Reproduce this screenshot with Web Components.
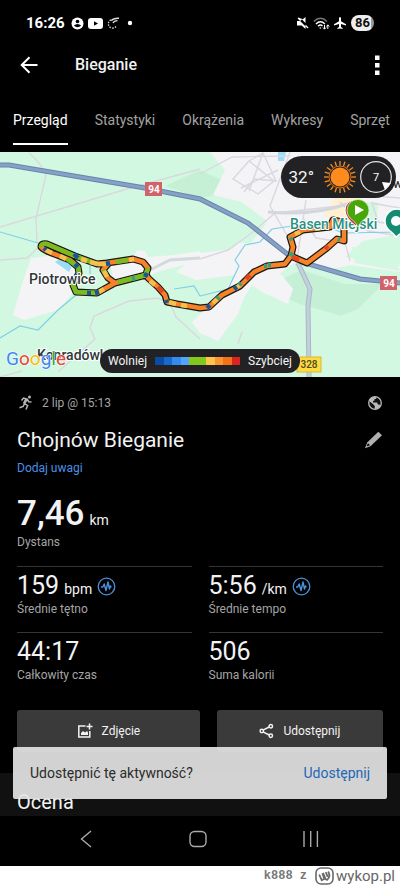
<!DOCTYPE html>
<html lang="pl">
<head>
<meta charset="utf-8">
<meta name="viewport" content="width=device-width, initial-scale=1">
<title>Bieganie</title>
<style>
  body { margin: 0; background: #fff; color: #f2f2f2; font-family: Roboto, "Liberation Sans", sans-serif; }
</style>
</head>
<body>
<activity-screen></activity-screen>

<script>
const define = (name, markup) => customElements.define(name, class extends HTMLElement {
  constructor() {
    super();
    const t = document.createElement('template');
    t.innerHTML = typeof markup === 'function' ? markup(this) : markup;
    this.attachShadow({ mode: 'open' }).append(t.content.cloneNode(true));
  }
});

define('status-bar', `
<style>
  :host { display: flex; align-items: center; height: 46px; padding: 0 26px; gap: 4px; color: #fff; }
  time { font: 700 15px/20px Roboto, sans-serif; margin-right: 2px; }
  .space { flex: 1; }
  .battery { font: 700 13px/16px Roboto, sans-serif; color: #111; background: linear-gradient(90deg, #eee 86%, #999 86%); border-radius: 8px; padding: 0 4px; margin-left: 1px; }
  svg { display: block; }
</style>
<time>16:26</time>
<svg width="13" height="13" viewBox="0 0 13 13" aria-hidden="true"><circle cx="6.500" cy="6.500" r="6" fill="#fff"/><circle cx="6.500" cy="4.500" r="1.800"/><path d="M2.800 8.600Q6.500 5.500 10.200 8.600Q6.500 12 2.800 8.600Z"/></svg>
<svg width="15" height="11" viewBox="0 0 15 11" aria-hidden="true"><rect width="15" height="11" rx="3" fill="#fff"/><path d="M6 3.200v4.600l4-2.300z"/></svg>
<svg width="14" height="12" viewBox="0 0 14 12" aria-hidden="true" fill="none" stroke="#ddd"><path d="M9 9.500A4.300 4.300 0 1 1 6 2.500" stroke-width="1.300" stroke-dasharray="1.500 1.200"/><path d="M4 3.500Q8 .8 12 1.300M6 6Q7 3.800 10.500 3.600" stroke-width="1.400"/></svg>
<svg width="10" height="6" viewBox="0 0 10 6" aria-hidden="true"><circle cx="5" cy="3" r="2.200" fill="#fff"/></svg>
<span class="space"></span>
<svg width="12" height="12" viewBox="0 0 12 12" aria-hidden="true"><path fill="#fff" d="M0 4h3l2-1.600L8.500 6V0L5.800 2.200 1.400.5.600 1.400l10 10 .9-.9-3-3V12L4.700 8.500H0z"/></svg>
<svg width="17" height="13" viewBox="0 0 17 13" aria-hidden="true" fill="none" stroke="#fff"><path d="M.8 4.500Q7.500-1.800 14 4.500" stroke="#777" stroke-width="1.400"/><path d="M3 7Q7.500 2.600 11.800 7M5 9.200Q7.500 7 9.500 9" stroke-width="1.400"/><circle cx="7.300" cy="11" r=".8" fill="#fff" stroke="none"/><path d="M11.500 8v4M10 10.500l1.500 1.700 1.500-1.700M14.800 12V8M13.400 9.500l1.400-1.700 1.400 1.700"/></svg>
<svg width="12" height="12" viewBox="0 0 12 12" aria-hidden="true"><path fill="#fff" d="M5 1Q6-1 7 1v3.200l5 3V8.500L7 7v3l1.600 1v1L6 11.400 3.400 12v-1L5 10V7L0 8.500V7.200l5-3z"/></svg>
<span class="battery">86</span>`);

define('app-bar', `
<style>
  :host { display: flex; align-items: center; height: 38px; padding: 0 16px; }
  button { border: 0; background: none; padding: 0; width: 26px; height: 26px; display: grid; place-items: center; }
  h1 { flex: 1; margin: 0 0 0 33px; font: 500 16px/22px Roboto, sans-serif; }
  button:last-child { width: 14px; }
</style>
<button aria-label="Wstecz"><svg width="18" height="18" viewBox="0 0 18 18" fill="none" stroke="#fff" stroke-width="2"><path d="M17.500 9H2M9.500 1.200L1.700 9l7.800 7.800"/></svg></button>
<h1><slot></slot></h1>
<button aria-label="Więcej"><svg width="5" height="20" viewBox="0 0 5 20" fill="#fff"><path d="M0 .5h4.500V5H0zM0 8h4.500v4.500H0zM0 15.500h4.500V20H0z"/></svg></button>`);

define('tab-strip', `
<style>
  :host { display: block; height: 68px; overflow: hidden; }
  nav { display: flex; gap: 27px; padding: 14px 0 0 13px; }
</style>
<nav><slot></slot></nav>`);

define('tab-link', `
<style>
  :host { display: block; flex: none; text-align: center; }
  a { display: block; font: 400 14px/20px Roboto, sans-serif; color: #a2a2a2; text-decoration: none; padding: 12px 0 13px; border-bottom: 2px solid transparent; }
  :host([selected]) a { color: #fff; border-color: #fff; }
</style>
<a href="#"><slot></slot></a>`);

const sunRays = Array.from({ length: 20 }, (_, i) => `<path d="M17 1v4.500" transform="rotate(${i * 18} 17 17)"/>`).join('');
const outline = 'M291 104L285 112L267 114L254 120L240 134L222 143L209 155L200 156L177 152L167 150L165 143L158 135L148 126L146 122L148 116L143 110L133 107L107 111L97 112L75 104L47 92Q41 91 41 95Q45 99 57 103L70 108L78 115L79 121L73 133L76 140L97 141L115 131L146 123M98 112L108 112L103 118L108 126L115 131M291 104L293 95L290 85L303 78L330 75L333 68L342 70L344 76L344 89L337 87L327 96L307 111L291 104';

define('route-map', `
<style>
  :host { display: block; position: relative; }
  .map { display: block; width: 100%; height: auto; }
  .weather { position: absolute; top: 4px; right: 4px; height: 42px; display: flex; align-items: center; gap: 9px; padding: 0 4px 0 8px; border-radius: 21px; background: #222224; font-size: 17px; color: #f4f4f4; }
  .weather svg { display: block; }
  .compass { margin-left: -6px; }
  .legend { position: absolute; bottom: 4px; left: 50%; transform: translateX(-50%); display: flex; align-items: center; gap: 8px; padding: 0 8px; border-radius: 12px; background: #222224; font-size: 12px; line-height: 24px; color: #f4f4f4; }
  .scale { width: 85px; height: 8px; background: linear-gradient(90deg, #0c4ba4 0 10%, #1769cb 10% 20%, #338aef 20% 30%, #54a4ff 30% 40%, #82c91e 40% 60%, #ffc64c 60% 70%, #ff952e 70% 80%, #f47115 80% 90%, #da2420 90%); }
</style>
<svg class="map" viewBox="0 0 400 225" role="img" aria-label="Mapa trasy">
  <rect width="400" height="225" fill="#d3f8e2"/>
  <g fill="#c5f0d6">
    <path d="M165 34L200 18 222 28 222 42 200 46z"/><path d="M284 126L302 118 345 132 383 132 358 157 341 164 300 152 278 143z"/>
  </g>
  <g fill="#f4f3f5">
    <path d="M210 0H400V82L363 89 345 105 400 114V120L350 113 328 118 310 111 296 110 280 121 293 137 288 152 262 140 252 133 244 146 238 162 218 189 200 181 192 170 222 141 236 123 196 128 176 120 200 101 232 97 254 75 268 70 242 50 213 43 225 18z"/>
    <path d="M31 106L57 103 78 115 74 140 58 158 24 168 13 163 22 132z"/>
    <path d="M110 109L135 103 137 98 145 99 148 105 174 103 200 99V109L160 119 140 127 113 128z"/>
  </g>
  <path fill="#d3f8e2" d="M336 52l42-2-1 18-20 8-20-14zM352 95l38 2 10 22-45-8zM228 58l38 14-16 20-30-4z"/>
  <path fill="#fff0d2" d="M337 42l25 4 8 20-28 3-18-5z"/>
  <path fill="#9bdcf4" d="M278 0h8l-2 9h-6zM55 110l6-4 12 6-4 8z"/>
  <g fill="none" stroke="#dad7e0" stroke-width="1.400">
    <path d="M29 1Q42 12 46 23L36 66 37 91M0 75L127 37 200 17M0 108L27 106 40 94M90 176L94 164 129 149 158 146 170 151 176 165 200 187M90 176L95 187 58 220M242 180l-4 12M0 225L22 219"/>
    <path d="M200 22L232 5 290 4M200 107L228 98 253 80 275 61 340 54M233 27l16-18 25 20-16 13zM249 9l14-8 13 28-22-2-10 13M263 1l-14 38M241 36l37-18M290 0l-20 54 18 31M306 48l-10 66M340 50l28 29 32 5M371 51l29 5M372 50l6 20 22 3M374 10v34l26 2M344 87l6 22M303 66l13 20 20 3"/>
    <path d="M200 106L170 108 150 118" stroke="#d2dadb" stroke-width="3"/>
    <path d="M268 60Q315 64 350 51" stroke="#d2d6dd" stroke-width="3"/>
  </g>
  <path fill="none" stroke="#7ed0e6" stroke-width="1.200" d="M0 80L38 91M0 186L20 174 38 178 58 158 76 143M200 144L228 137 239 114 235 108 245 93 260 90 272 77 292 74M90 113v9M174 137l20-3 6 10M308 80l25-3 10 4 57-1"/>
  <g fill="none"><path d="M298 111L310 137 308 154 309 225" stroke="#a7b8c8" stroke-width="5"/><path d="M298 111L310 137 308 154 309 225" stroke="#c3d0dc" stroke-width="3"/>
    <path d="M0 13H9L145 36 200 47 248 71 291 105 308 112 360 127 400 131" stroke="#6784ae" stroke-width="5"/>
    <path d="M0 13H9L145 36 200 47 248 71 291 105 308 112 360 127 400 131" stroke="#87a1c4" stroke-width="3"/></g>
  <g fill="none" stroke-linejoin="round" stroke-linecap="round">
    <path d="${outline}" stroke="#151a12" stroke-width="7"/>
    <path d="${outline}" stroke="#f8822a" stroke-width="4.500"/>
    <g stroke-linecap="butt" stroke-width="4.500">
      <path stroke="#77bd22" d="M97 112L75 104L47 92Q41 91 41 95M67 107L78 115L79 121L73 133L76 140L97 141M118 130L146 123M146 122L148 116M116 110L128 108M103 118L106 122"/>
      <path stroke="#f7bf4c" d="M46 98L52 101M60 104L66 107M81 107L87 109M90 110L98 112M129 108L134 107M98 112L106 112M104 119L107 125M169 150L176 152M181 153L187 154M213 151L217 147M236 136L240 133M99 140L104 137M150 129L155 133M295 82L300 80M315 77L320 76"/>
      <path stroke="#17569b" d="M74 102L78 106M44 96L46 98M106 112L110 111M95 141L99 140M145 125L147 121M166 148L167 151M207 156L210 153M75 112L78 115M77 122L75 127M87 141L91 141M234 137L237 135"/>
      <path stroke="#34a080" d="M264 114L267 114M290 86L292 88M290 104L293 101M338 87L340 88M217 147L219 145M239 133L241 131M132 127L135 126M268 113L271 113"/>
      <path stroke="#e6441d" d="M158 135L163 140M292 105L299 108M246 127L250 123M325 97L328 94"/>
    </g>
  </g>
  <g font-family="Roboto, sans-serif" font-weight="500" fill="#30383a" stroke="#fff" stroke-width="2" stroke-linejoin="round" paint-order="stroke">
    <text x="29" y="132" font-size="14">Piotrowice</text>
    <text x="37" y="208" font-size="14">Konradówka</text>
    <text x="393" y="36" font-size="13">w</text>
    <text x="290" y="77" font-size="14" fill="#28917f">Basen Miejski</text>
  </g>
  <g font-family="Roboto, sans-serif" font-weight="700" font-size="10" text-anchor="middle" fill="#fff">
    <rect x="145" y="30" width="17" height="14" fill="#d2626a"/><text x="154" y="41">94</text>
    <rect x="380" y="124" width="17" height="14" fill="#d2626a"/><text x="389" y="135">94</text>
    <rect x="297" y="205" width="24" height="15" fill="#fddb42" stroke="#d8b934"/><text x="309" y="216" font-weight="500" fill="#514820">328</text>
  </g>
  <path fill="#d82942" stroke="#fff" d="M356 74Q345 66 345 58A10 10 0 0 1 365 58z"/>
  <path fill="#48a708" stroke="#e5f5d8" stroke-width=".7" d="M358 75Q356 70 350 66A11 11 0 1 1 366 66Q360 70 358 75z"/>
  <path fill="#fff" d="M355 53v10l9-5z"/>
  <path fill="#138d72" stroke="#fff" stroke-width="1.500" d="M396 85Q394 82 389 78A12 12 0 1 1 405 78z"/><circle cx="396" cy="69" r="5" fill="#fff"/>
  <text x="6" y="213" font-family="Roboto, sans-serif" font-size="19" font-weight="400" stroke="#fff" stroke-width="1" paint-order="stroke"><tspan fill="#4285f4">G</tspan><tspan fill="#ea4335">o</tspan><tspan fill="#fbbc05">o</tspan><tspan fill="#4285f4">g</tspan><tspan fill="#34a853">l</tspan><tspan fill="#ea4335">e</tspan></text>
</svg>
<div class="weather"><span>32°</span>
  <svg width="34" height="34" viewBox="0 0 34 34" aria-hidden="true"><circle cx="17" cy="17" r="9.500" fill="#ff8a1d"/><circle cx="17" cy="17" r="11" fill="none" stroke="#ff8a1d" stroke-width=".8"/><g stroke="#ff8a1d" stroke-width="1.300">${sunRays}</g></svg>
  <svg class="compass" width="32" height="34" viewBox="0 0 32 34"><circle cx="16" cy="17" r="15.300" fill="none" stroke="#e4e4e4" stroke-width="1.200"/><path d="M22 22l9 1-6 7z" fill="#fff"/><text x="16" y="21" font-family="Roboto, sans-serif" font-size="11" text-anchor="middle" fill="#fff">7</text></svg>
</div>
<div class="legend"><span>Wolniej</span><span class="scale"></span><span>Szybciej</span></div>`);

define('activity-header', `
<style>
  :host { display: block; padding: 16px 17px 0; }
  .meta, .name { display: flex; align-items: center; }
  .meta { font-size: 12px; line-height: 20px; color: #a5a5a5; gap: 8px; }
  .meta span { flex: 1; }
  .name { margin-top: 12px; }
  h2 { flex: 1; margin: 0; font: 400 21px/30px Roboto, sans-serif; }
  button { border: 0; background: none; padding: 0; height: 20px; }
  a { display: block; margin-top: 4px; font-size: 12px; line-height: 18px; color: #4a91e6; text-decoration: none; }
  svg { display: block; }
</style>
<div class="meta">
  <svg width="17" height="16" viewBox="0 0 17 16" aria-hidden="true" fill="none" stroke="#b5b5b5" stroke-width="1.500"><circle cx="12.500" cy="2" r="1.500" fill="#b5b5b5" stroke="none"/><path d="M4.500 5.500L6.500 3l3.800 1.200L7.600 8.500l3 2L9 14.500M10.300 4.500l1.400 2.200 2.800.2M7.500 8.500L6.200 11.500 2.500 12.800M8.800 4.200L6.500 8.700"/></svg>
  <span><slot name="when"></slot></span>
  <svg width="16" height="16" viewBox="0 0 16 16" aria-label="Publiczne"><circle cx="8" cy="8" r="6.300" fill="#111" stroke="#b9b9b9" stroke-width="1.300"/><path fill="#b9b9b9" d="M2 5Q4 1.500 9.500 2.200L9 4H7.500V5.500L6 6V7.500h4l1 2h1.500l.8 2Q11.500 14 8 14.300L7.500 13 8 11.500 6.500 9.500 2 6z"/></svg>
</div>
<div class="name"><h2><slot name="title"></slot></h2>
  <button aria-label="Edytuj nazwę"><svg width="19" height="18" viewBox="0 0 19 18"><path fill="#b0b0b0" d="M14.300.7l3.700 3.600L6.500 15.300 1 17.200 3.200 11.500z"/><path d="M4 12.200L6 14.300 3.300 15.300 2.800 14.800z"/></svg></button></div>
<a href="#"><slot name="notes"></slot></a>`);

define('metric-tile', el => `
<style>
  :host { display: block; border-top: 1px solid #353535; padding-top: 4px; }
  :host([lead]) { border: 0; padding-top: 16px; }
  .value { display: flex; align-items: baseline; gap: 5px; font-size: 25px; line-height: 30px; height: 30px; }
  small { font-size: 14px; }
  .label { font-size: 12px; line-height: 16px; color: #a5a5a5; }
  svg { align-self: center; }
  :host([lead]) .value { font-size: 35px; font-weight: 500; line-height: 42px; height: 41px; }
  :host([lead]) small { font-weight: 400; }
</style>
<div class="value"><slot></slot>${el.hasAttribute('unit') ? `<small>${el.getAttribute('unit')}</small>` : ''}${el.hasAttribute('zone') ? `
  <svg width="19" height="19" viewBox="0 0 19 19" aria-hidden="true" fill="none" stroke="#4a91dc"><circle cx="9.500" cy="9.500" r="8.300" stroke-width="1.300"/><path stroke-width="1.400" stroke-linejoin="round" d="M4 10h1.800l1.400-3 1.800 6.500L11 5l1.500 7 1-3 .8 1.300"/></svg>` : ''}</div>
<div class="label"><slot name="label"></slot></div>`);

define('action-button', `
<style>
  :host { display: block; }
  button { width: 100%; height: 42px; border: 0; border-radius: 3px; background: #3a3a3a; color: #f2f2f2; display: flex; align-items: center; justify-content: center; gap: 9px; font: 400 12px/18px Roboto, sans-serif; }
</style>
<button><slot name="icon"></slot><slot></slot></button>`);

define('snack-bar', `
<style>
  :host { display: flex; align-items: center; justify-content: space-between; height: 52px; padding: 0 17px; border-radius: 2px; background: rgba(228, 228, 228, .92); color: #2b2b2b; font-size: 14px; }
  button { border: 0; background: none; padding: 0; font: 400 14px/20px Roboto, sans-serif; color: #1e67b4; }
</style>
<span><slot></slot></span><button><slot name="action"></slot></button>`);

define('system-nav', `
<style>
  :host { display: flex; justify-content: space-between; align-items: center; height: 50px; padding: 0 81px 4px 77px; box-sizing: border-box; background: #000; }
  button { border: 0; background: none; padding: 0; width: 18px; height: 18px; }
  svg { display: block; }
</style>
<button aria-label="Wstecz"><svg width="18" height="18" viewBox="0 0 18 18" fill="none" stroke="#aaa" stroke-width="1.400"><path d="M14 1L4.500 9 14 17"/></svg></button>
<button aria-label="Ekran główny"><svg width="18" height="18" viewBox="0 0 18 18" fill="none" stroke="#aaa" stroke-width="1.400"><rect x="1" y="1.500" width="16" height="15" rx="4.500"/></svg></button>
<button aria-label="Ostatnie"><svg width="18" height="18" viewBox="0 0 18 18" stroke="#aaa" stroke-width="1.400"><path d="M3 1v16M9.700 1v16M16.400 1v16"/></svg></button>`);

define('credit-line', `
<style>
  :host { display: flex; justify-content: flex-end; align-items: center; height: 20px; padding-right: 5px; background: #fff; color: #777; }
  .author { font: 700 12px/20px "Liberation Mono", monospace; margin-right: 8px; }
  .site { font: 400 15px/20px Roboto, sans-serif; color: #666; }
  svg { margin-right: 2px; }
</style>
<span class="author"><slot></slot></span>
<svg width="19" height="18" viewBox="0 0 19 18" fill="none" stroke="#6a6a6a" aria-hidden="true"><rect x="1" y="1" width="17" height="16" rx="5" stroke-width="1.600"/><path stroke-width="1.800" stroke-linejoin="round" d="M4.200 7.500L6.800 13.300 9.300 11.700 7.300 6.200M9.300 11.700L12.200 12.800Q16 9.500 13.200 4.500M8 5.800L10.300 11.300M10.800 5.200L12.700 9.800"/></svg>
<span class="site"><slot name="site"></slot></span>`);

define('activity-screen', `
<style>
  :host { display: block; }
  .app { position: relative; background: #000; }
  .grid { display: grid; grid-template-columns: 1fr 1fr; column-gap: 17px; padding: 0 17px; }
  .lead { grid-column: 1 / -1; padding-bottom: 16px; }
  .grid metric-tile:not(.lead) { padding-bottom: 15px; }
  .actions { display: grid; grid-template-columns: 11fr 10fr; gap: 17px; padding: 12px 17px 21px; }
  .rating { background: #111; padding: 17px 17px 2px; }
  .rating h2 { margin: 0; font: 400 20px/24px Roboto, sans-serif; }
  snack-bar { position: absolute; left: 13px; right: 13px; bottom: 17px; }
</style>
<div class="app">
  <status-bar></status-bar>
  <app-bar>Bieganie</app-bar>
  <tab-strip><tab-link selected>Przegląd</tab-link><tab-link>Statystyki</tab-link><tab-link>Okrążenia</tab-link><tab-link>Wykresy</tab-link><tab-link>Sprzęt</tab-link></tab-strip>
  <route-map></route-map>
  <activity-header><span slot="when">2 lip @ 15:13</span><span slot="title">Chojnów Bieganie</span><span slot="notes">Dodaj uwagi</span></activity-header>
  <div class="grid">
    <metric-tile class="lead" lead unit="km">7,46<span slot="label">Dystans</span></metric-tile>
    <metric-tile unit="bpm" zone>159<span slot="label">Średnie tętno</span></metric-tile>
    <metric-tile unit="/km" zone>5:56<span slot="label">Średnie tempo</span></metric-tile>
    <metric-tile>44:17<span slot="label">Całkowity czas</span></metric-tile>
    <metric-tile>506<span slot="label">Suma kalorii</span></metric-tile>
  </div>
  <div class="actions">
    <action-button><svg slot="icon" width="16" height="16" viewBox="0 0 16 16" fill="none" stroke="#f2f2f2" stroke-width="1.500"><path d="M8.500 3H1.800v11h11V8M12.500.5v6M9.500 3.500h6"/><path fill="#f2f2f2" stroke="none" d="M4 12V10l2-2 2 1.500L10 8l1 1.500V12z"/></svg>Zdjęcie</action-button>
    <action-button><svg slot="icon" width="15" height="16" viewBox="0 0 15 16" fill="none" stroke="#f2f2f2" stroke-width="1.500"><path d="M4 8.800L10.200 12M4 7.200L10.200 4"/><circle cx="2.800" cy="8" r="1.700"/><circle cx="11.800" cy="3.200" r="1.700"/><circle cx="11.800" cy="12.800" r="1.700"/></svg>Udostępnij</action-button>
  </div>
  <section class="rating"><h2>Ocena</h2></section>
  <snack-bar>Udostępnić tę aktywność?<span slot="action">Udostępnij</span></snack-bar>
</div>
<system-nav></system-nav>
<credit-line>k888 z<span slot="site">wykop.pl</span></credit-line>`);
</script>
</body>
</html>
